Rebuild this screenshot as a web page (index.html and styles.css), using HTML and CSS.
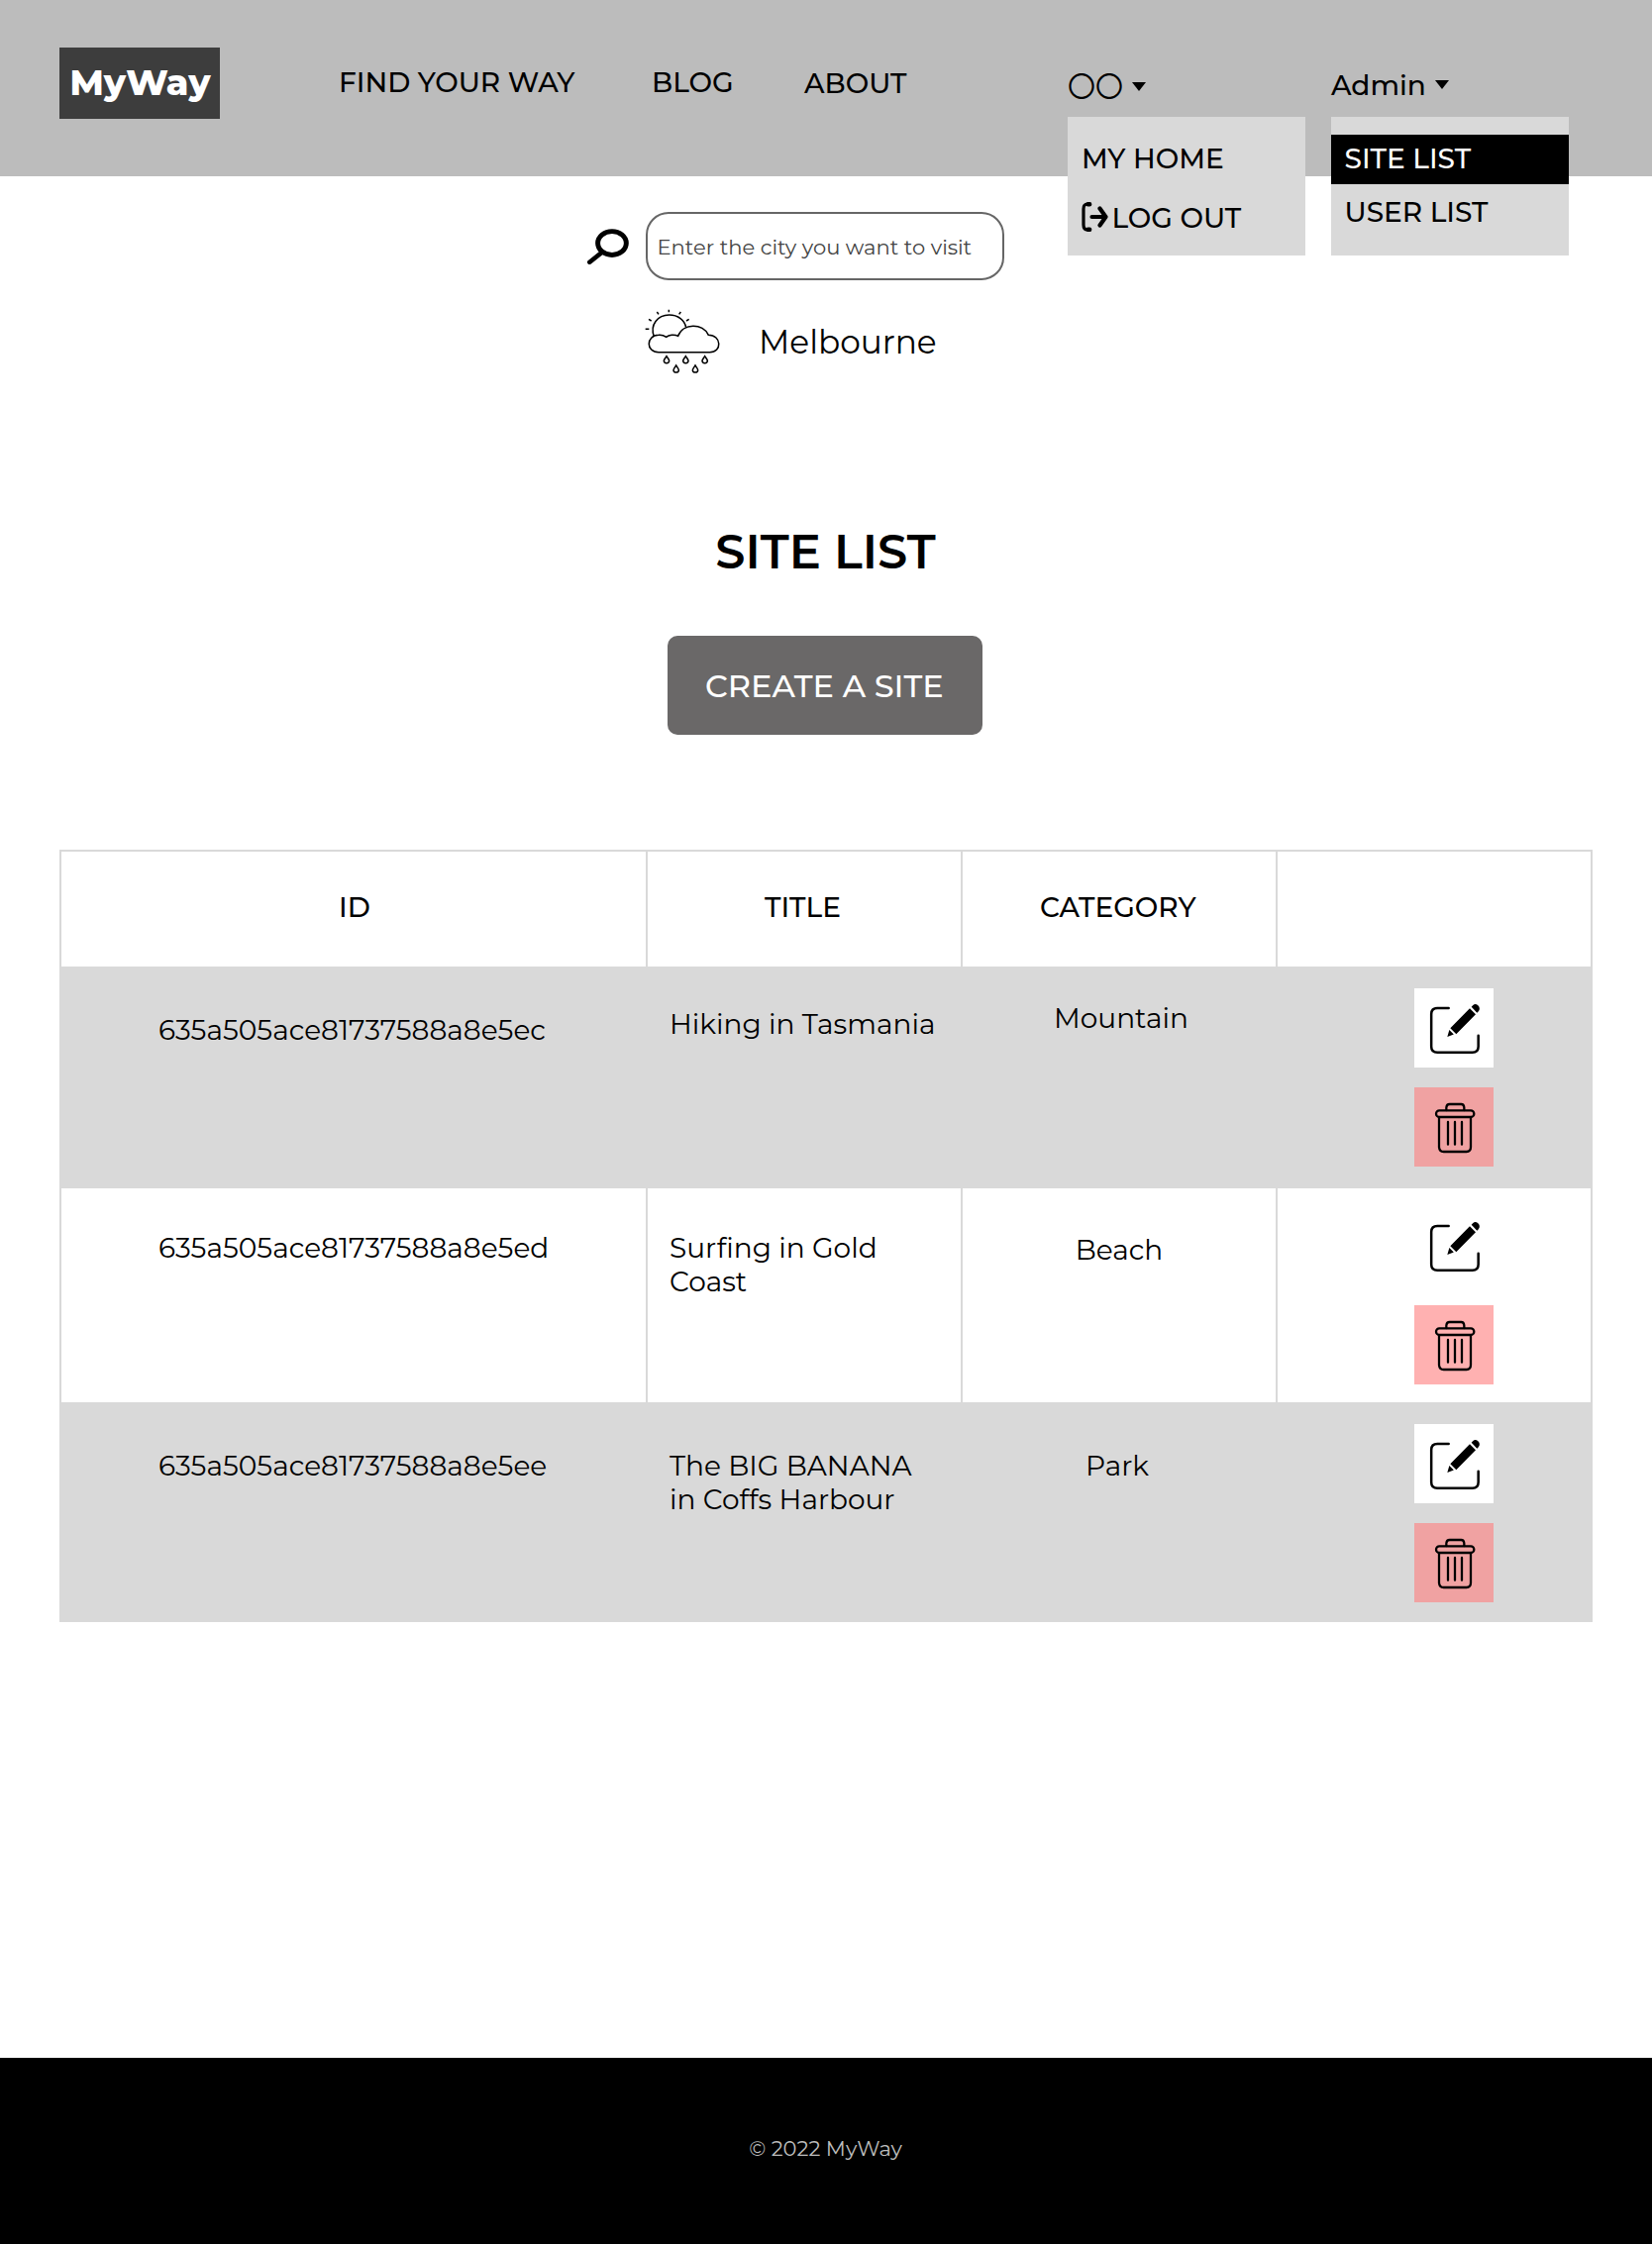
FILE: index.html
```html
<!DOCTYPE html>
<html lang="en">
<head>
<meta charset="utf-8">
<title>MyWay - Site list</title>
<link rel="stylesheet" href="styles.css">
</head>
<body>
<svg class="sprite" aria-hidden="true">
  <symbol id="edit" viewBox="0 0 240 240">
    <path d="M104 60H70Q51.500 60 51.500 78V176Q51.500 194 70 194H176Q194 194 194 176V143" fill="none" stroke="#000" stroke-width="7.500" stroke-linecap="round"/>
    <path d="M109 120.500L127 138.500L186 79L168 61ZM100 147L106 126L119.500 139.500ZM173 56L178 51Q185 45 193 52Q201 60 195 69L190 74Z"/>
  </symbol>
  <symbol id="trash" viewBox="0 0 240 240">
    <g fill="none" stroke="#000" stroke-width="6.800" stroke-linecap="round">
      <rect x="66" y="70" width="115" height="20" rx="10"/>
      <path d="M97 69V61Q98 51 107 51H142Q150 51 151 61V69M75 91V181Q76 195 89 195H158Q171 195 171 181V91M102 105V173M123 105V173M144 105V173"/>
    </g>
  </symbol>
  <symbol id="drop" viewBox="-12 -14 24 28" overflow="visible">
    <path d="M0 -10C3 -5 8 0 8 4A8 7 0 0 1 -8 4C-8 0 -3 -5 0 -10Z" fill="none" stroke="#000" stroke-width="4.500"/>
  </symbol>
</svg>

<header class="header">
  <a class="logo">MyWay</a>
  <nav class="nav">
    <a class="nav-find">FIND YOUR WAY</a>
    <a class="nav-blog">BLOG</a>
    <a class="nav-about">ABOUT</a>
  </nav>
  <div class="account">
    <div class="trigger">
      <span class="rings">〇〇</span>
      <svg class="caret" viewBox="0 0 14 9"><path d="M0 0H14L7 9Z"/></svg>
    </div>
    <div class="menu menu-account">
      <a class="my-home">MY HOME</a>
      <a class="log-out">
        <svg viewBox="0 0 27 30" fill="none" stroke="#000" stroke-linecap="round" stroke-linejoin="round">
          <path d="M8.500 2H6Q2 2 2 7V23Q2 28 6 28H8.500" stroke-width="3.200"/>
          <path d="M6.500 2.300H8.200M6.500 27.700H8.200" stroke-width="4.400"/>
          <path d="M10.500 15H23M18.500 6.500L24.500 15L18.500 23.500" stroke-width="4.200"/>
        </svg>LOG OUT</a>
    </div>
  </div>
  <div class="admin">
    <div class="trigger">
      <span class="admin-name">Admin</span>
      <svg class="caret" viewBox="0 0 14 9"><path d="M0 0H14L7 9Z"/></svg>
    </div>
    <div class="menu menu-admin">
      <a class="active">SITE LIST</a>
      <a class="user-list">USER LIST</a>
    </div>
  </div>
</header>

<main class="main">
  <div class="search">
    <svg class="lens" viewBox="99 123 127 109" fill="none" stroke="#000">
      <ellipse cx="174.500" cy="167" rx="43.500" ry="36" stroke-width="15"/>
      <path d="M145 194L106 225" stroke-width="14" stroke-linecap="round"/>
    </svg>
    <div class="search-box">Enter the city you want to visit</div>
  </div>
  <div class="weather">
    <svg viewBox="30 30 240 210">
      <g fill="none" stroke="#000" stroke-width="4.600">
        <path d="M61 119C48 84 72 54 107 54C134 54 154 70 158 92"/>
        <path d="M75 167C36 167 36 116 75 115C85 114 92 117 98 121C106 115 122 112 134 118C148 78 210 78 226 115C266 115 268 167 230 167Z"/>
        <path d="M106 38V46M70 45L75 52M142 45L137 52M45 67L53 72M167 67L159 72M35 97H46"/>
      </g>
      <use href="#drop" x="87" y="175" width="24" height="28"/>
      <use href="#drop" x="145" y="175" width="24" height="28"/>
      <use href="#drop" x="203" y="175" width="24" height="28"/>
      <use href="#drop" x="116" y="203" width="24" height="28"/>
      <use href="#drop" x="174" y="203" width="24" height="28"/>
    </svg>
    <span class="city">Melbourne</span>
  </div>

  <h1 class="title">SITE LIST</h1>
  <a class="create">CREATE A SITE</a>

  <div class="table">
    <div class="row head">
      <div class="h-id">ID</div>
      <div class="h-title">TITLE</div>
      <div class="h-category">CATEGORY</div>
      <div></div>
    </div>
    <div class="row hiking">
      <div class="id">635a505ace81737588a8e5ec</div>
      <div class="name">Hiking in Tasmania</div>
      <div class="category">Mountain</div>
      <div class="actions">
        <a class="btn edit"><svg><use href="#edit"/></svg></a>
        <a class="btn delete"><svg><use href="#trash"/></svg></a>
      </div>
    </div>
    <div class="row surfing">
      <div class="id">635a505ace81737588a8e5ed</div>
      <div class="name">Surfing in Gold<br>Coast</div>
      <div class="category">Beach</div>
      <div class="actions">
        <a class="btn edit"><svg><use href="#edit"/></svg></a>
        <a class="btn delete"><svg><use href="#trash"/></svg></a>
      </div>
    </div>
    <div class="row banana">
      <div class="id">635a505ace81737588a8e5ee</div>
      <div class="name">The BIG BANANA<br>in Coffs Harbour</div>
      <div class="category">Park</div>
      <div class="actions">
        <a class="btn edit"><svg><use href="#edit"/></svg></a>
        <a class="btn delete"><svg><use href="#trash"/></svg></a>
      </div>
    </div>
  </div>
</main>

<footer class="footer">© 2022 MyWay</footer>
</body>
</html>
```
FILE: styles.css
```css
* { box-sizing: border-box; }

body {
  margin: 0;
  width: 1668px;
  background: #fff;
  color: #000;
  font: 400 28px/34px Montserrat, Inter, sans-serif;
  white-space: nowrap;
}

svg { display: block; flex: none; }
.sprite { position: absolute; width: 0; height: 0; }

/* Header */
.header {
  display: grid;
  grid-template-columns: 282px 736px 266px 240px;
  height: 178px;
  padding-left: 60px;
  background: #bcbcbc;
  font-weight: 500;
}
.logo {
  width: 162px;
  height: 72px;
  margin-top: 48px;
  padding-left: 10.5px;
  background: #3d3d3d;
  color: #fff;
  font-size: 36px;
  font-weight: 800;
  line-height: 70px;
}
.nav {
  display: grid;
  grid-template-columns: 316px 154px auto;
  padding-top: 66px;
}
.nav-about { padding-top: 1px; }

.account, .admin { position: relative; padding-top: 69px; }
.trigger { display: flex; align-items: flex-start; height: 34px; }
.rings { font: 400 28px/34px "Noto Sans CJK JP", sans-serif; width: 65px; }
.admin-name { width: 105px; }
.caret { width: 14px; height: 9px; margin-top: 14px; }
.admin .caret { margin-top: 12px; }

.menu {
  position: absolute;
  top: 118px;
  left: 0;
  width: 240px;
  height: 140px;
  display: flex;
  flex-direction: column;
  background: #d9d9d9;
}
.menu-account { padding: 25px 0 0 13.5px; gap: 26px; }
.my-home { padding-left: 0.5px; }
.log-out { display: flex; }
.log-out svg { width: 27px; height: 30px; margin: 1px 4px 0 0; }
.menu-admin { padding-top: 18px; }
.menu-admin a { padding-left: 13.5px; }
.menu-admin .active {
  height: 50px;
  margin-bottom: 11px;
  background: #000;
  color: #fff;
  line-height: 48px;
}

/* Search and weather */
.main { height: 1900px; padding-top: 35.5px; }
.search { display: flex; align-items: flex-start; padding-left: 593px; gap: 17px; }
.lens { width: 42px; height: 36px; margin-top: 17.5px; }
.search-box {
  width: 362px;
  height: 69px;
  padding-left: 9.5px;
  border: 2px solid #666;
  border-radius: 23px;
  color: #444;
  font-size: 21.1px;
  line-height: 68px;
}
.weather { display: flex; height: 70px; margin: 27.5px 0 0 650px; gap: 36px; }
.weather svg { width: 80px; height: 70px; }
.city { padding-top: 14.5px; font-size: 32.8px; line-height: 40px; }

.title {
  margin: 149px 0 0;
  padding-right: 1px;
  text-align: center;
  font-size: 48px;
  font-weight: 600;
  line-height: 56px;
}
.create {
  display: block;
  width: 318px;
  height: 100px;
  margin: 57px 0 0 674px;
  padding: 1px 0 0 38px;
  border-radius: 10px;
  background: #6a6868;
  color: #fff;
  font-size: 32px;
  font-weight: 500;
  line-height: 100px;
}

/* Site table */
.table { width: 1548px; margin: 116px 0 0 60px; border: 2px solid #d9d9d9; }
.row { display: grid; grid-template-columns: 590px 318px 318px 318px; }
.row > div + div { border-left: 2px solid #d9d9d9; }
.head { height: 116px; font-weight: 500; }
.head > div { padding-top: 39px; }
.head .h-id { padding-left: 280px; }
.head .h-title { padding-left: 118px; }
.head .h-category { padding-left: 78px; }

.hiking { height: 224px; background: #d9d9d9; }
.surfing { height: 216px; }
.banana { height: 220px; background: #d9d9d9; }

.id { padding: 47px 0 0 98px; }
.name { padding: 47px 0 0 22px; }
.category { padding: 47px 4px 0 0; text-align: center; }
.hiking .name { padding-top: 41px; }
.hiking .category { padding: 35px 0 0 4px; }
.surfing .id { padding-top: 43px; }
.surfing .name { padding-top: 43px; }
.surfing .category { padding: 45px 0 0; }

.actions { display: flex; flex-direction: column; gap: 20px; padding: 22px 0 0 138px; }
.surfing .actions { padding-top: 18px; }
.btn, .btn svg { width: 80px; height: 80px; }
.edit { background: #fff; }
.delete { background: rgba(255, 125, 125, 0.6); }

.footer {
  height: 188px;
  padding: 77px 1px 0 0;
  background: #000;
  color: #bdbdbd;
  text-align: center;
  font-size: 21px;
  line-height: 30px;
}
```
